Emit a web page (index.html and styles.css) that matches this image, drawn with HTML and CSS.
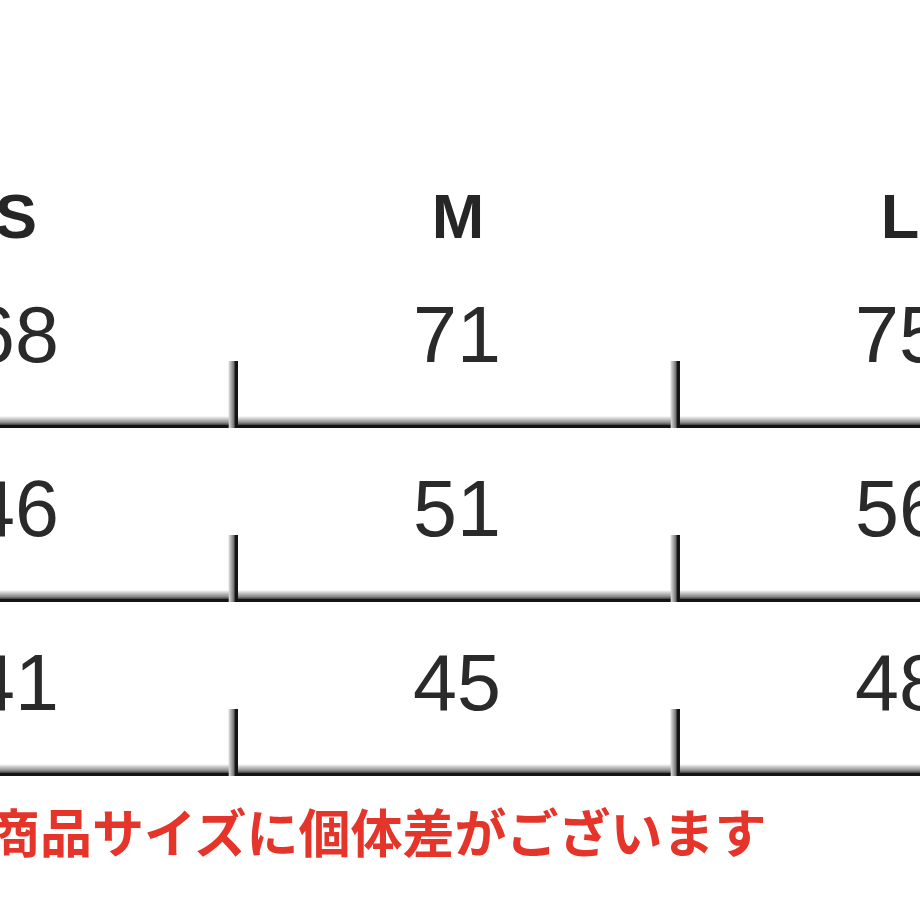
FILE: index.html
```html
<!DOCTYPE html>
<html lang="ja">
<head>
<meta charset="utf-8">
<title>サイズ表</title>
<link rel="stylesheet" href="styles.css">
</head>
<body>
<div class="chart">
  <div class="head">
    <div class="hcell">S</div>
    <div class="hcell">M</div>
    <div class="hcell">L</div>
  </div>
  <div class="row">
    <div class="cell first">68</div>
    <div class="cell">71</div>
    <div class="cell">75</div>
  </div>
  <div class="row">
    <div class="cell first">46</div>
    <div class="cell">51</div>
    <div class="cell">56</div>
  </div>
  <div class="row">
    <div class="cell first">41</div>
    <div class="cell">45</div>
    <div class="cell">48</div>
  </div>
  <p class="note">商品サイズに個体差がございます</p>
</div>
</body>
</html>
```
FILE: styles.css
```css
html, body {
  margin: 0;
  padding: 0;
  background: #ffffff;
  overflow: hidden;
  width: 920px;
  height: 920px;
}
.chart {
  margin-left: -214px;
  width: 1326px;
  font-family: "Liberation Sans", Arial, sans-serif;
  color: #2a2a2a;
}
.head {
  display: grid;
  grid-template-columns: repeat(3, 442px);
  padding-top: 178px;
}
.hcell {
  font-weight: bold;
  font-size: 63px;
  line-height: 76px;
  text-align: center;
  padding-left: 18px;
  color: #262626;
}
.row {
  display: grid;
  grid-template-columns: repeat(3, 442px);
  height: 174px;
  background: linear-gradient(to bottom, rgba(255,255,255,0) 0%, #d2d2d2 20%, #8a8a8a 55%, #4a4a4a 72%, #141414 75%, #141414 100%) left bottom / 100% 12px no-repeat;
}
.cell {
  box-sizing: border-box;
  height: 174px;
  padding-top: 31px;
  padding-left: 16px;
  font-size: 79px;
  line-height: 100px;
  text-align: center;
  background: linear-gradient(to right, rgba(255,255,255,0) 0%, #cfcfcf 15%, #7a7a7a 55%, #3a3a3a 68%, #141414 70%, #141414 100%) left bottom / 10px 67px no-repeat;
}
.note {
  margin: 25px 0 0 202px;
  font-family: "Noto Sans CJK JP", "Noto Sans", sans-serif;
  font-weight: bold;
  font-size: 52px;
  line-height: 60px;
  color: #e5352a;
  white-space: nowrap;
}
```
